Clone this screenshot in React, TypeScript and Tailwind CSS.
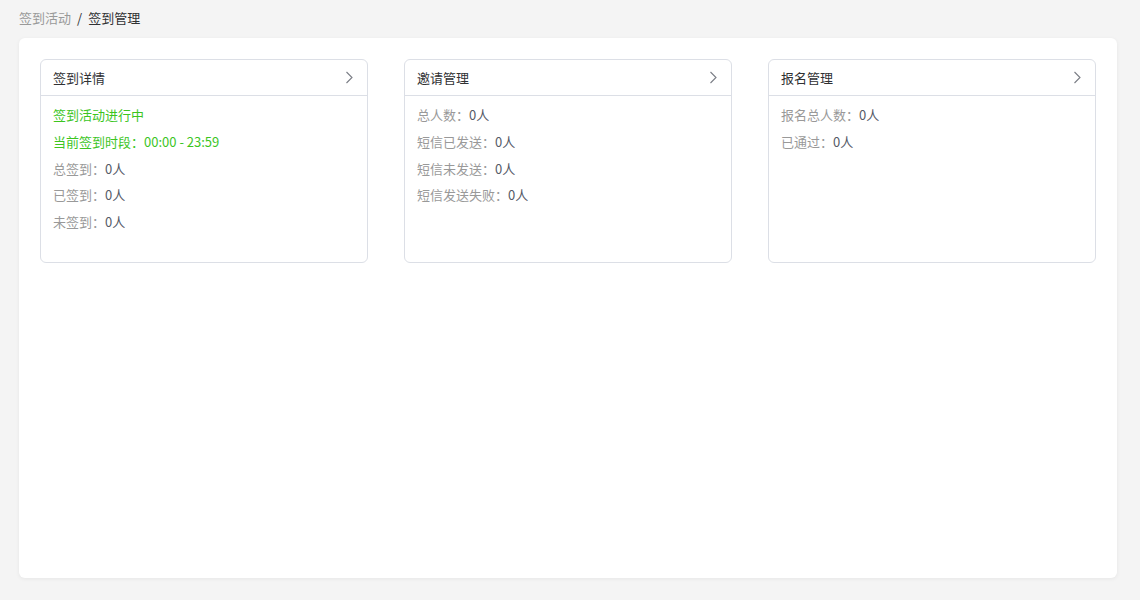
type Row = { label: string; value?: string; green?: boolean };

const cards: { title: string; rows: Row[] }[] = [
  {
    title: "签到详情",
    rows: [
      { label: "签到活动进行中", green: true },
      { label: "当前签到时段：00:00 - 23:59", green: true },
      { label: "总签到：", value: "0人" },
      { label: "已签到：", value: "0人" },
      { label: "未签到：", value: "0人" },
    ],
  },
  {
    title: "邀请管理",
    rows: [
      { label: "总人数：", value: "0人" },
      { label: "短信已发送：", value: "0人" },
      { label: "短信未发送：", value: "0人" },
      { label: "短信发送失败：", value: "0人" },
    ],
  },
  {
    title: "报名管理",
    rows: [
      { label: "报名总人数：", value: "0人" },
      { label: "已通过：", value: "0人" },
    ],
  },
];

function Arrow() {
  return (
    <svg width="8" height="13" viewBox="0 0 8 13" fill="none" className="text-[#7a7d85]">
      <path d="M1.5 1l5.5 5.5L1.5 12" stroke="currentColor" strokeWidth="1.1" />
    </svg>
  );
}

function InfoCard({ title, rows }: { title: string; rows: Row[] }) {
  return (
    <div className="flex h-[204px] flex-col rounded-[6px] border border-[#dcdfe6] bg-white">
      <div className="flex h-9 shrink-0 items-center justify-between border-b border-[#dcdfe6] pl-3 pr-[14px]">
        <span className="text-[13px] text-[#303133]">{title}</span>
        <Arrow />
      </div>
      <div className="flex flex-col px-3 pt-[6px]">
        {rows.map((row) => (
          <div key={row.label} className="h-[26.75px] leading-[26px] text-[13px]">
            {row.green ? (
              <span className="text-[#3cc51f]">{row.label}</span>
            ) : (
              <>
                <span className="text-[#999999]">{row.label}</span>
                <span className="text-[#555a66]">{row.value}</span>
              </>
            )}
          </div>
        ))}
      </div>
    </div>
  );
}

export default function App() {
  return (
    <div
      className="h-[600px] w-[1140px] bg-[#f4f4f4] pl-[19px] pr-[23px]"
      style={{ fontFamily: '"Noto Sans CJK SC", "Noto Sans", sans-serif' }}
    >
      <div className="flex h-[38px] items-center pb-[3px] text-[13px]">
        <span className="text-[#999999]">签到活动</span>
        <span className="mx-[6px] text-[#303133]">/</span>
        <span className="text-[#303133]">签到管理</span>
      </div>
      <div className="h-[540px] rounded-[6px] bg-white p-[21px] shadow-[0_1px_4px_rgba(0,0,0,0.06)]">
        <div className="grid grid-cols-3 gap-9">
          {cards.map((card) => (
            <InfoCard key={card.title} title={card.title} rows={card.rows} />
          ))}
        </div>
      </div>
    </div>
  );
}
